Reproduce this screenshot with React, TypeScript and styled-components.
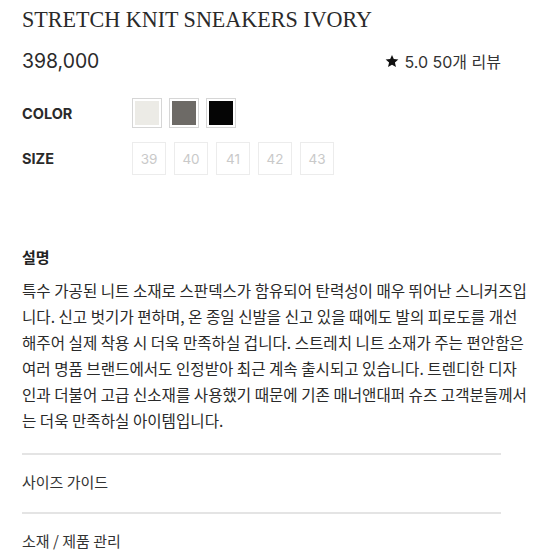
import styled, { createGlobalStyle } from "styled-components";

const GlobalStyle = createGlobalStyle`
  html, body {
    margin: 0;
    padding: 0;
    background: #ffffff;
  }
  body {
    font-family: "Noto Sans CJK KR", "Noto Sans", sans-serif;
    color: #222222;
  }
`;

const latin = `"Inter", "Noto Sans CJK KR", sans-serif`;

const Page = styled.div`
  width: 552px;
  padding: 6px 0 0 22px;
  box-sizing: border-box;
`;

const Title = styled.h1`
  margin: 0;
  font-family: "Liberation Serif", serif;
  font-weight: 400;
  font-size: 22.1px;
  line-height: 28px;
  color: #2a2a2a;
`;

const PriceRow = styled.div`
  display: flex;
  align-items: center;
  justify-content: space-between;
  width: 479px;
  margin-top: 14px;
  height: 26px;
`;

const Price = styled.span`
  font-family: ${latin};
  font-size: 19.4px;
  color: #2a2a2a;
`;

const Rating = styled.span`
  display: flex;
  align-items: center;
  gap: 5px;
  font-family: ${latin};
  font-size: 16px;
  color: #333333;
`;

const OptionRow = styled.div<{ $top: number }>`
  display: flex;
  align-items: center;
  margin-top: ${(p) => p.$top}px;
`;

const OptionLabel = styled.span`
  width: 110px;
  font-family: ${latin};
  font-size: 14.5px;
  font-weight: 700;
  color: #2a2a2a;
`;

const Swatches = styled.div`
  display: flex;
  gap: 7px;
`;

const Swatch = styled.div<{ $color: string }>`
  width: 30px;
  height: 30px;
  box-sizing: border-box;
  border: 1px solid #d6d6d6;
  padding: 2px;
  background: #ffffff;

  &::after {
    content: "";
    display: block;
    width: 100%;
    height: 100%;
    background: ${(p) => p.$color};
  }
`;

const Sizes = styled.div`
  display: flex;
  gap: 8px;
`;

const SizeBox = styled.div`
  width: 34px;
  height: 33px;
  box-sizing: border-box;
  border: 1px solid #ececec;
  display: flex;
  align-items: center;
  justify-content: center;
  font-family: ${latin};
  font-size: 13.5px;
  color: #c9c9c9;
`;

const SectionTitle = styled.h2`
  margin: 72px 0 0 0;
  font-size: 15px;
  font-weight: 700;
  line-height: 20px;
  color: #222222;
`;

const Description = styled.p`
  margin: 10px 0 0 0;
  font-size: 15.6px;
  line-height: 26px;
  color: #2a2a2a;
  white-space: nowrap;
`;

const Line = styled.span`
  display: block;
`;

const Accordion = styled.div`
  width: 479px;
  margin-top: 20px;
`;

const AccordionItem = styled.div`
  border-top: 2px solid #e4e4e4;
  height: 57px;
  display: flex;
  align-items: center;
  font-size: 15px;
  color: #333333;
`;

const ItemText = styled.span`
  margin-top: -4px;
`;

const StarIcon = () => (
  <svg width="14" height="14" viewBox="0 0 24 24">
    <path
      d="M12 1.5l3.1 7.2 7.8.7-5.9 5.2 1.8 7.7L12 18.3l-6.8 4 1.8-7.7L1.1 9.4l7.8-.7z"
      fill="#111111"
    />
  </svg>
);

const colors = ["#ecebe6", "#6d6a66", "#050505"];
const sizes = ["39", "40", "41", "42", "43"];

const descriptionLines = [
  "특수 가공된 니트 소재로 스판덱스가 함유되어 탄력성이 매우 뛰어난 스니커즈입",
  "니다. 신고 벗기가 편하며, 온 종일 신발을 신고 있을 때에도 발의 피로도를 개선",
  "해주어 실제 착용 시 더욱 만족하실 겁니다. 스트레치 니트 소재가 주는 편안함은",
  "여러 명품 브랜드에서도 인정받아 최근 계속 출시되고 있습니다. 트렌디한 디자",
  "인과 더불어 고급 신소재를 사용했기 때문에 기존 매너앤대퍼 슈즈 고객분들께서",
  "는 더욱 만족하실 아이템입니다.",
];

export default function App() {
  return (
    <>
      <GlobalStyle />
      <Page>
        <Title>STRETCH KNIT SNEAKERS IVORY</Title>
        <PriceRow>
          <Price>398,000</Price>
          <Rating>
            <StarIcon />
            5.0 50개 리뷰
          </Rating>
        </PriceRow>
        <OptionRow $top={24}>
          <OptionLabel>COLOR</OptionLabel>
          <Swatches>
            {colors.map((c) => (
              <Swatch key={c} $color={c} />
            ))}
          </Swatches>
        </OptionRow>
        <OptionRow $top={14}>
          <OptionLabel>SIZE</OptionLabel>
          <Sizes>
            {sizes.map((s) => (
              <SizeBox key={s}>{s}</SizeBox>
            ))}
          </Sizes>
        </OptionRow>
        <SectionTitle>설명</SectionTitle>
        <Description>
          {descriptionLines.map((l) => (
            <Line key={l}>{l}</Line>
          ))}
        </Description>
        <Accordion>
          <AccordionItem>
            <ItemText>사이즈 가이드</ItemText>
          </AccordionItem>
          <AccordionItem>
            <ItemText>소재 / 제품 관리</ItemText>
          </AccordionItem>
        </Accordion>
      </Page>
    </>
  );
}
